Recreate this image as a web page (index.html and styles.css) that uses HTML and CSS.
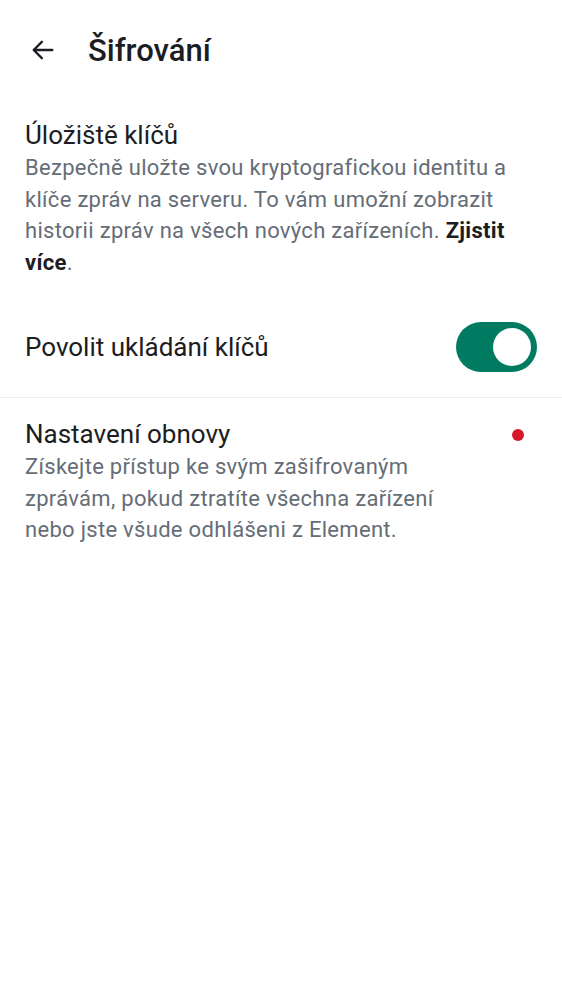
FILE: index.html
```html
<!DOCTYPE html>
<html lang="cs">
<head>
<meta charset="utf-8">
<link rel="stylesheet" href="styles.css">
</head>
<body>
<header class="topbar">
  <svg class="back" width="28" height="28" viewBox="0 0 24 24"><path d="M20 12H4.5M11 5l-7 7 7 7" fill="none" stroke="#1b1d22" stroke-width="2" stroke-linecap="round" stroke-linejoin="round"/></svg>
  <h1 class="title">Šifrování</h1>
</header>
<main>
  <section class="item">
    <h2 class="item-title">Úložiště klíčů</h2>
    <p class="item-desc">Bezpečně uložte svou kryptografickou identitu a klíče zpráv na serveru. To vám umožní zobrazit historii zpráv na všech nových zařízeních. <b>Zjistit více</b>.</p>
  </section>
  <section class="toggle-row">
    <span class="toggle-label">Povolit ukládání klíčů</span>
    <span class="switch"><span class="thumb"></span></span>
  </section>
  <div class="divider"></div>
  <section class="item item-dot">
    <div class="item-text">
      <h2 class="item-title">Nastavení obnovy</h2>
      <p class="item-desc">Získejte přístup ke svým zašifrovaným zprávám, pokud ztratíte všechna zařízení nebo jste všude odhlášeni z Element.</p>
    </div>
    <span class="dot"></span>
  </section>
</main>
</body>
</html>
```
FILE: styles.css
```css
* { box-sizing: border-box; }
body {
  margin: 0;
  background: #fff;
  font-family: Roboto, "Noto Sans", sans-serif;
  color: #1b1d22;
}
.topbar {
  display: flex;
  align-items: center;
  height: 100px;
  padding-left: 29px;
}
.back { display: block; }
.title {
  margin: 0 0 0 31px;
  font-size: 31px;
  font-weight: 500;
  letter-spacing: 0;
}
.item {
  padding: 18px 25px 0;
}
.item-title {
  margin: 0;
  font-size: 26px;
  font-weight: 400;
  line-height: 34px;
}
.item-desc {
  margin: 0;
  font-size: 22px;
  line-height: 31.7px;
  letter-spacing: 0.3px;
  color: #656d77;
}
.item-desc b { color: #1b1d22; font-weight: 700; }
.toggle-row {
  display: flex;
  align-items: center;
  justify-content: space-between;
  padding: 0 25px;
  height: 100px;
  margin-top: 18px;
}
.toggle-label { font-size: 26px; }
.switch {
  width: 81px;
  height: 50px;
  border-radius: 25px;
  background: #007a61;
  display: flex;
  align-items: center;
  justify-content: flex-end;
  padding-right: 6px;
}
.thumb {
  width: 38px;
  height: 38px;
  border-radius: 50%;
  background: #fff;
}
.divider { height: 1px; background: #e9eaec; }
.item-dot {
  display: flex;
  align-items: flex-start;
  justify-content: space-between;
  padding-top: 19px;
}
.item-text { max-width: 450px; }
.dot {
  width: 12px;
  height: 12px;
  border-radius: 50%;
  background: #d51928;
  margin: 12px 13px 0 0;
}
```
